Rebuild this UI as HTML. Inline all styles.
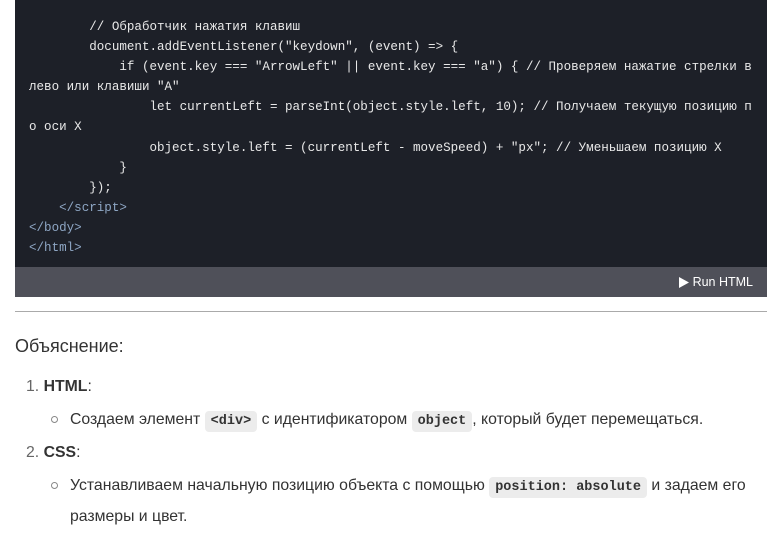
<!DOCTYPE html>
<html><head><meta charset="utf-8"><style>
body{margin:0;width:777px;height:534px;background:#fff;position:relative;overflow:hidden;font-family:"Liberation Sans","DejaVu Sans",sans-serif;color:#333}
.code{position:absolute;left:15px;top:0;width:752px;height:267px;background:#1d2028}
.ft{position:absolute;left:15px;top:267px;width:752px;height:30px;background:#4f5059;color:#fff;font-size:12.5px}
.ft span{position:absolute;right:14px;top:8px}
.ft svg{position:absolute;right:78px;top:10px}
.l{position:absolute;left:29px;font-family:"Liberation Mono","DejaVu Sans Mono",monospace;font-size:12.55px;color:#e8e8e8;white-space:pre;line-height:16px}
.t{color:#8ea6c4}
hr{position:absolute;left:15px;top:311px;width:752px;margin:0;border:0;border-top:1px solid #aaa}
.tx{position:absolute;font-size:15.8px;white-space:nowrap;line-height:20px}
code{font-family:"Liberation Mono",monospace;font-size:13.5px;background:#ececec;border-radius:4px;padding:3px 6px;color:#333;font-weight:bold}
.b{width:5px;height:5px;border:1px solid #888;border-radius:50%;position:absolute}
</style></head><body>
<div class="code"></div>
<div class="l" style="top:19px">        // Обработчик нажатия клавиш</div>
<div class="l" style="top:39px">        document.addEventListener("keydown", (event) =&gt; {</div>
<div class="l" style="top:59px">            if (event.key === "ArrowLeft" || event.key === "a") { // Проверяем нажатие стрелки в</div>
<div class="l" style="top:79px">лево или клавиши "A"</div>
<div class="l" style="top:99px">                let currentLeft = parseInt(object.style.left, 10); // Получаем текущую позицию п</div>
<div class="l" style="top:119px">о оси X</div>
<div class="l" style="top:140px">                object.style.left = (currentLeft - moveSpeed) + "px"; // Уменьшаем позицию X</div>
<div class="l" style="top:160px">            }</div>
<div class="l" style="top:180px">        });</div>
<div class="l t" style="top:200px">    &lt;/script&gt;</div>
<div class="l t" style="top:220px">&lt;/body&gt;</div>
<div class="l t" style="top:240px">&lt;/html&gt;</div>
<div class="ft"><svg width="10" height="11" viewBox="0 0 10 11"><path d="M0 0L10 5.5L0 11Z" fill="#fff"/></svg><span>Run HTML</span></div>
<hr>
<div class="tx" style="left:15px;top:336px;font-size:18px">Объяснение:</div>
<div class="tx" style="left:26px;top:377px"><span style="color:#666">1.</span> <b>HTML</b>:</div>
<div class="b" style="left:51px;top:416px"></div>
<div class="tx" style="left:70px;top:410px">Создаем элемент <code>&lt;div&gt;</code> с идентификатором <code>object</code>, который будет перемещаться.</div>
<div class="tx" style="left:26px;top:443px"><span style="color:#666">2.</span> <b>CSS</b>:</div>
<div class="b" style="left:51px;top:482px"></div>
<div class="tx" style="left:70px;top:476px">Устанавливаем начальную позицию объекта с помощью <code>position: absolute</code> и задаем его</div>
<div class="tx" style="left:70px;top:507px">размеры и цвет.</div>
</body></html>
